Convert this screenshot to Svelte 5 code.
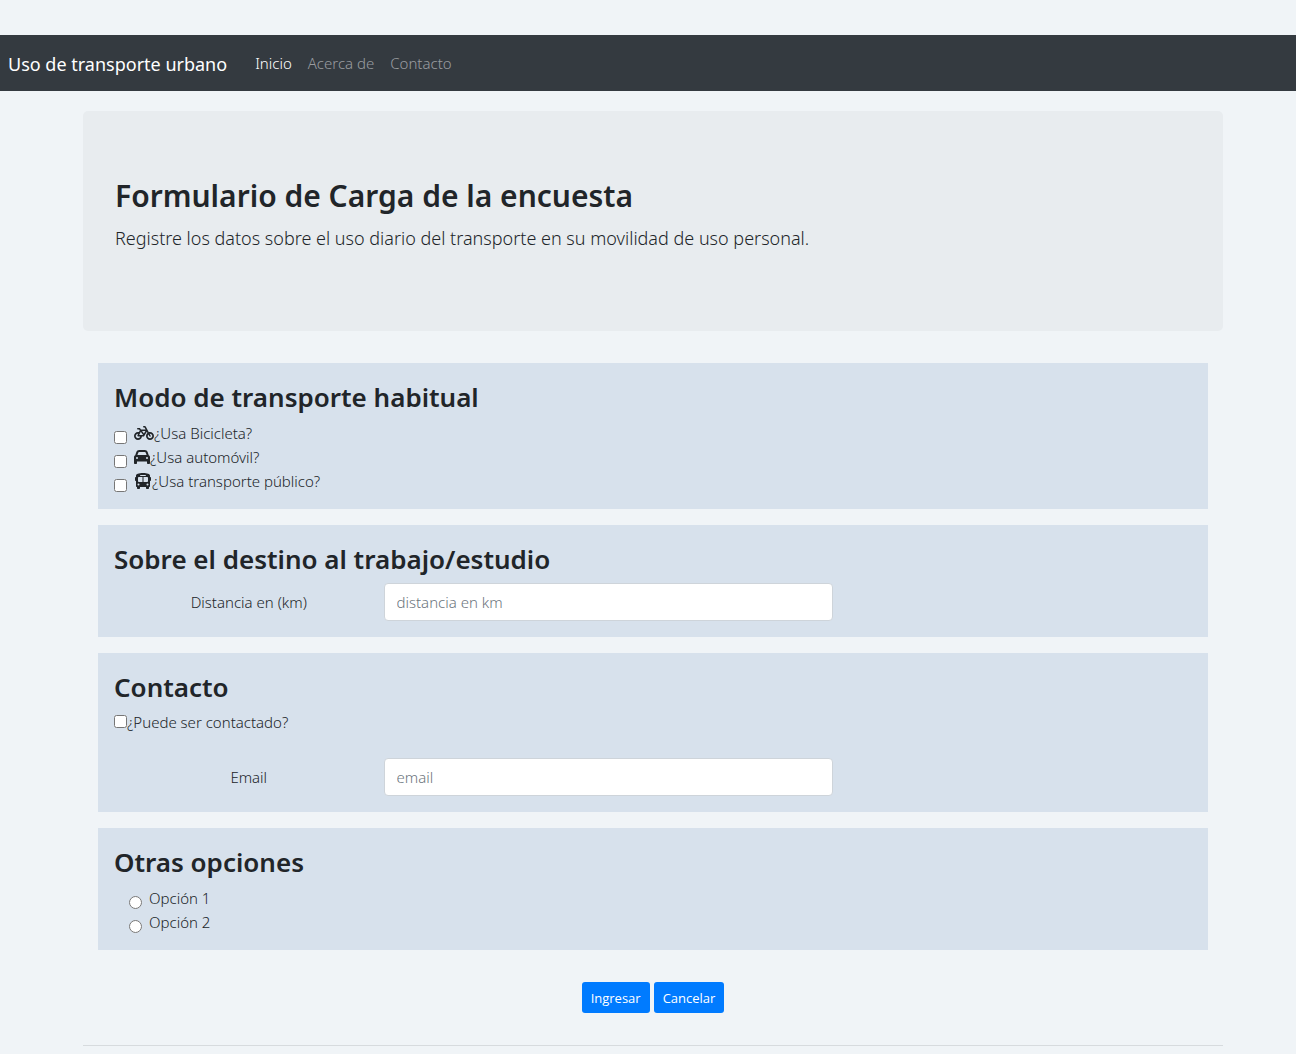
<script>
  const links = [
    { text: 'Inicio', active: true },
    { text: 'Acerca de', active: false },
    { text: 'Contacto', active: false }
  ];

  const modes = [
    {
      id: 'bicicleta',
      text: '¿Usa Bicicleta?',
      box: '0 0 640 512',
      kind: 'bicycle',
      path: 'M312 32c-13.3 0-24 10.7-24 24s10.7 24 24 24h25.7l34.6 64H222.9l-27.4-38C191 99.7 183.7 96 176 96H120c-13.3 0-24 10.7-24 24s10.7 24 24 24h43.7l22.1 30.7-26.6 53.1c-10-2.5-20.5-3.8-31.2-3.8C57.3 224 0 281.3 0 352s57.3 128 128 128c65.3 0 119.1-48.9 127-112h49c8.5 0 16.3-4.5 20.7-11.8l84.8-143.5 21.7 40.1C402.4 276.3 384 312 384 352c0 70.7 57.3 128 128 128s128-57.3 128-128s-57.3-128-128-128c-13.5 0-26.5 2.1-38.7 6L375.4 48.8C369.8 38.4 359 32 347.2 32H312zM458.6 303.7l32.3 59.7c6.3 11.7 20.9 16 32.5 9.7s16-20.9 9.7-32.5l-32.3-59.7c3.6-.6 7.4-.9 11.2-.9c39.8 0 72 32.2 72 72s-32.2 72-72 72s-72-32.2-72-72c0-18.6 7-35.5 18.6-48.3zM133.2 368h65c-7.3 32.1-36 56-70.2 56c-39.8 0-72-32.2-72-72s32.2-72 72-72c1.7 0 3.4 .1 5.1 .2l-24.2 48.5c-9 18.1 4.1 39.4 24.3 39.4zm33.7-48l50.7-101.3 72.9 101.2-.1 .1H166.8zm90.6-128H365.9L317 274.8 257.4 192z'
    },
    {
      id: 'automovil',
      text: '¿Usa automóvil?',
      box: '0 0 512 512',
      kind: 'car',
      path: 'M135.2 117.4L109.1 192H402.9l-26.1-74.6C372.3 104.6 360.2 96 346.6 96H165.4c-13.6 0-25.7 8.6-30.2 21.4zM39.6 196.8L74.8 96.3C88.3 57.8 124.6 32 165.4 32H346.6c40.8 0 77.1 25.8 90.6 64.3l35.2 100.5c23.2 9.6 39.6 32.5 39.6 59.2V400v48c0 17.7-14.3 32-32 32H448c-17.7 0-32-14.3-32-32V400H96v48c0 17.7-14.3 32-32 32H32c-17.7 0-32-14.3-32-32V400 256c0-26.7 16.4-49.6 39.6-59.2zM128 288a32 32 0 1 0 -64 0 32 32 0 1 0 64 0zm288 32a32 32 0 1 0 0-64 32 32 0 1 0 0 64z'
    },
    {
      id: 'publico',
      text: '¿Usa transporte público?',
      box: '0 0 576 512',
      kind: 'bus',
      path: 'M288 0C422.4 0 512 35.2 512 80V96l0 32c17.7 0 32 14.3 32 32v64c0 17.7-14.3 32-32 32l0 160c0 17.7-14.3 32-32 32v32c0 17.7-14.3 32-32 32H416c-17.7 0-32-14.3-32-32V448H192v32c0 17.7-14.3 32-32 32H128c-17.7 0-32-14.3-32-32l0-32c-17.7 0-32-14.3-32-32l0-160c-17.7 0-32-14.3-32-32V160c0-17.7 14.3-32 32-32h0V96h0V80C64 35.2 153.6 0 288 0zM128 160v96c0 17.7 14.3 32 32 32H272V128H160c-17.7 0-32 14.3-32 32zM304 288H416c17.7 0 32-14.3 32-32V160c0-17.7-14.3-32-32-32H304V288zM144 400a32 32 0 1 0 0-64 32 32 0 1 0 0 64zm288 0a32 32 0 1 0 0-64 32 32 0 1 0 0 64zM384 80c0-8.8-7.2-16-16-16H208c-8.8 0-16 7.2-16 16s7.2 16 16 16H368c8.8 0 16-7.2 16-16z'
    }
  ];

  const options = ['Opción 1', 'Opción 2'];
</script>

<nav class="navbar">
  <a class="brand" href="#inicio">Uso de transporte urbano</a>
  <ul class="links">
    {#each links as link}
      <li><a class="link" class:active={link.active} href="#{link.text}">{link.text}</a></li>
    {/each}
  </ul>
</nav>

<main class="page">
  <div class="container">
    <header class="jumbotron">
      <h1>Formulario de Carga de la encuesta</h1>
      <p>Registre los datos sobre el uso diario del transporte en su movilidad de uso personal.</p>
    </header>

    <form class="survey" onsubmit={(e) => e.preventDefault()}>
      <section class="panel">
        <h2>Modo de transporte habitual</h2>
        {#each modes as mode}
          <div class="check">
            <input type="checkbox" id={mode.id} />
            <label for={mode.id}>
              <svg class="icon {mode.kind}" viewBox={mode.box} aria-hidden="true"><path d={mode.path} /></svg>{mode.text}
            </label>
          </div>
        {/each}
      </section>

      <section class="panel">
        <h2>Sobre el destino al trabajo/estudio</h2>
        <div class="field">
          <label for="distancia">Distancia en (km)</label>
          <input class="text" id="distancia" type="text" placeholder="distancia en km" />
        </div>
      </section>

      <section class="panel">
        <h2>Contacto</h2>
        <div class="contact">
          <input type="checkbox" id="contactado" />
          <label for="contactado">¿Puede ser contactado?</label>
        </div>
        <div class="field">
          <label for="email">Email</label>
          <input class="text" id="email" type="email" placeholder="email" />
        </div>
      </section>

      <section class="panel">
        <h2>Otras opciones</h2>
        <div class="options">
          {#each options as option, i}
            <div class="check">
              <input type="radio" name="opcion" id="opcion{i}" value={i} />
              <label for="opcion{i}">{option}</label>
            </div>
          {/each}
        </div>
      </section>

      <div class="actions">
        <button class="btn" type="submit">Ingresar</button>
        <button class="btn" type="button">Cancelar</button>
      </div>
    </form>
    <hr />
  </div>
</main>

<style>
  :global(body) {
    margin: 0;
    background: #f0f4f7;
    color: #212529;
    font-family: 'Noto Sans', 'Open Sans', sans-serif;
    font-size: 15px;
    font-weight: 300;
    line-height: 24px;
  }

  * {
    box-sizing: border-box;
  }

  .navbar {
    display: flex;
    align-items: center;
    min-height: 56px;
    margin-top: 35px;
    padding: 0 8px;
    background: #343a40;
  }

  .brand {
    margin-right: 20px;
    padding-top: 2px;
    color: #fff;
    font-size: 18px;
    font-weight: 400;
    line-height: 30px;
    text-decoration: none;
  }

  .links {
    display: flex;
    margin: 0;
    padding: 0;
    list-style: none;
  }

  .link {
    display: block;
    padding: 8px;
    color: #9a9da0;
    text-decoration: none;
  }

  .link.active {
    color: #fff;
  }

  .page {
    padding: 20px 0 8px 10px;
  }

  .container {
    max-width: 1140px;
    margin: 0 auto;
  }

  .jumbotron {
    margin-bottom: 32px;
    padding: 66px 32px 64px;
    border-radius: 5px;
    background: #e8ecef;
  }

  h1 {
    margin: 0 0 8px;
    font-size: 30px;
    font-weight: 600;
    line-height: 38px;
  }

  .jumbotron p {
    margin: 0 0 14px;
    font-size: 18px;
    line-height: 30px;
  }

  .survey {
    padding: 0 15px;
  }

  .panel {
    margin-bottom: 16px;
    padding: 16px;
    background: #d7e1ec;
  }

  h2 {
    margin: 0 0 6px;
    font-size: 26px;
    font-weight: 600;
    line-height: 36px;
  }

  input[type='checkbox'],
  input[type='radio'] {
    width: 13px;
    height: 13px;
    margin: 0;
  }

  .check {
    display: flex;
    gap: 7px;
  }

  .check input[type] {
    margin-top: 10px;
  }

  .check label {
    height: 24px;
  }

  .icon {
    height: 16px;
    vertical-align: -2px;
    fill: currentColor;
  }

  .bicycle {
    width: 20px;
  }

  .car {
    width: 16px;
  }

  .bus {
    width: 18px;
  }

  .field {
    display: grid;
    grid-template-columns: 3fr 5fr 4fr;
    align-items: center;
  }

  .field label {
    text-align: center;
  }

  .text {
    width: 100%;
    height: 38px;
    padding: 6px 12px;
    border: 1px solid #ced4da;
    border-radius: 4px;
    background: #fff;
    color: #495057;
    font: inherit;
  }

  .text::placeholder {
    color: #6c757d;
    opacity: 1;
  }

  .contact {
    display: flex;
    margin-bottom: 25px;
    line-height: 22px;
  }

  .contact input[type] {
    margin-top: 4px;
  }

  .options {
    padding-left: 15px;
  }

  .actions {
    display: flex;
    justify-content: center;
    gap: 4px;
    padding: 16px 0 32px;
  }

  .btn {
    height: 31px;
    padding: 0 9px;
    border: 0;
    border-radius: 3px;
    background: #007bff;
    color: #fff;
    font-family: 'Open Sans', sans-serif;
    font-size: 13px;
    font-weight: 400;
  }

  hr {
    margin: 0;
    border: 0;
    border-top: 1px solid #d7dbde;
  }
</style>
